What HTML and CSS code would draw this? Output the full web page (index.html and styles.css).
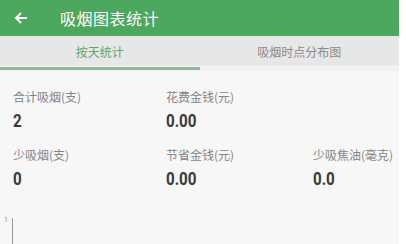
FILE: index.html
```html
<!DOCTYPE html>
<html>
<head>
    <meta charset="utf-8">
    <link rel="stylesheet" href="styles.css">
</head>
<body>
<div class="screen">
    <div class="toolbar">
        <svg class="toolbar__back" width="16" height="16" viewBox="0 0 16 16">
            <path d="M14 8H3M8 3L3 8l5 5" fill="none" stroke="#fff" stroke-width="2"/>
        </svg>
        <div class="toolbar__title">吸烟图表统计</div>
    </div>

    <div class="tabs">
        <div class="tab tab--active">按天统计</div>
        <div class="tab">吸烟时点分布图</div>
    </div>
    <div class="tab-indicator"><div class="tab-indicator__bar"></div></div>

    <div class="stats">
        <div class="stat">
            <div class="stat__label">合计吸烟(支)</div>
            <div class="stat__value">2</div>
        </div>
        <div class="stat">
            <div class="stat__label">花费金钱(元)</div>
            <div class="stat__value">0.00</div>
        </div>
        <div class="stat"></div>

        <div class="stat">
            <div class="stat__label">少吸烟(支)</div>
            <div class="stat__value">0</div>
        </div>
        <div class="stat">
            <div class="stat__label">节省金钱(元)</div>
            <div class="stat__value">0.00</div>
        </div>
        <div class="stat">
            <div class="stat__label">少吸焦油(毫克)</div>
            <div class="stat__value">0.0</div>
        </div>
    </div>

    <div class="chart">
        <div class="chart__tick">3</div>
        <div class="chart__axis"></div>
    </div>
</div>
</body>
</html>
```

FILE: styles.css
```css
html, body {
    margin: 0;
    background-color: #ffffff;
    font-family: "Noto Sans CJK SC", "Noto Sans", sans-serif;
}

.screen {
    width: 399px;
    height: 244px;
    background-color: #f7f7f7;
    overflow: hidden;
}

.toolbar {
    display: flex;
    align-items: center;
    height: 36px;
    background-color: #4ca75f;
    color: #ffffff;
}

.toolbar__back {
    margin-left: 13px;
    margin-right: 31px;
}

.toolbar__title {
    font-size: 16px;
    letter-spacing: 0.5px;
}

.tabs {
    display: flex;
    height: 30px;
    background-color: #e7e7e7;
}

.tab {
    flex: 1;
    display: flex;
    align-items: center;
    justify-content: center;
    font-size: 12px;
    color: #8a8a8a;
}

.tab--active {
    color: #5fa56f;
}

.tab-indicator {
    height: 4px;
    background-color: #eef3ef;
}

.tab-indicator__bar {
    width: 200px;
    height: 3px;
    margin-top: 1px;
    background-color: #93b59c;
}

.stats {
    display: grid;
    grid-template-columns: 153px 147px 1fr;
    padding: 19px 0 0 13px;
    row-gap: 16px;
}

.stat__label {
    font-size: 12px;
    line-height: 14px;
    color: #858585;
}

.stat__value {
    display: inline-block;
    margin-top: 8px;
    font-family: Roboto, sans-serif;
    font-weight: bold;
    font-size: 18.5px;
    line-height: 19px;
    color: #3a3a3a;
    transform: scaleX(0.82);
    transform-origin: left center;
}

.chart {
    display: flex;
    margin-top: 26px;
    padding-left: 4px;
}

.chart__tick {
    font-size: 6px;
    line-height: 8px;
    color: #9a9a9a;
    margin-right: 5px;
}

.chart__axis {
    width: 1px;
    height: 30px;
    margin-top: 2px;
    background-color: #9a9a9a;
}
```
